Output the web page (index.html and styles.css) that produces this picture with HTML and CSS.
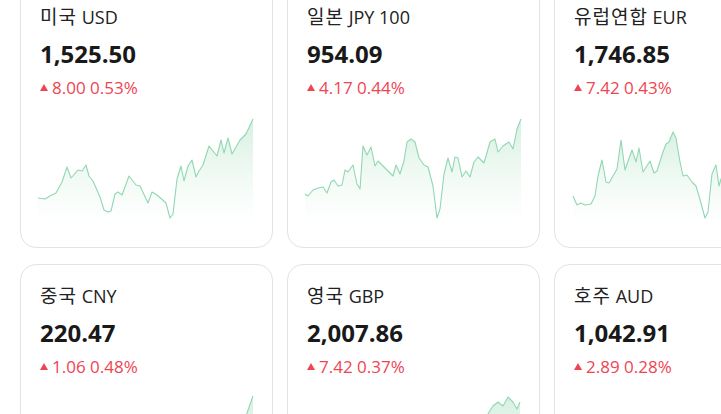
FILE: index.html
```html
<!DOCTYPE html>
<html lang="ko">
<head>
<meta charset="utf-8">
<title>환율</title>
<link rel="stylesheet" href="styles.css">
</head>
<body>
<div class="grid">
  <div class="card">
    <div class="name"><span class="ko">미국</span> USD</div>
    <div class="price">1,525.50</div>
    <div class="change"><span class="tri"></span>8.00 0.53%</div>
    <svg class="chart" viewBox="38 118 216 107" preserveAspectRatio="none">
      <defs><linearGradient id="g" x1="0" y1="0" x2="0" y2="1"><stop offset="0" stop-color="#d7f0e1"/><stop offset="1" stop-color="#ffffff" stop-opacity="0.6"/></linearGradient></defs>
      <polygon fill="url(#g)" points="38,225 38,199 45,200 50,197 56,194 62,183 67,168 71,179 78,171 82,172 86,166 89,177 93,182 100,198 104,211 108,213 111,212 115,195 118,193 122,196 129,177 136,186 140,187 148,204 152,193 157,196 166,204 170,219 173,215 177,180 181,167 184,182 188,167 192,161 196,178 199,172 203,166 209,147 217,157 221,141 224,154 228,139 232,155 240,141 246,135 253,120 253,225"/>
      <polyline class="line" points="38,199 45,200 50,197 56,194 62,183 67,168 71,179 78,171 82,172 86,166 89,177 93,182 100,198 104,211 108,213 111,212 115,195 118,193 122,196 129,177 136,186 140,187 148,204 152,193 157,196 166,204 170,219 173,215 177,180 181,167 184,182 188,167 192,161 196,178 199,172 203,166 209,147 217,157 221,141 224,154 228,139 232,155 240,141 246,135 253,120"/>
    </svg>
  </div>
  <div class="card">
    <div class="name"><span class="ko">일본</span> JPY 100</div>
    <div class="price">954.09</div>
    <div class="change"><span class="tri"></span>4.17 0.44%</div>
    <svg class="chart" viewBox="305 118 216 107" preserveAspectRatio="none">
      <polygon fill="url(#g)" points="305,225 305,195 308,197 313,191 318,189 323,188 327,194 331,183 334,181 338,187 342,186 345,171 348,173 353,166 357,185 360,190 363,147 367,156 371,148 375,167 378,162 383,167 389,173 393,177 396,166 400,175 404,162 407,143 411,140 415,143 419,159 424,166 428,168 433,187 437,219 440,210 444,175 448,159 452,173 455,158 458,159 462,178 466,172 470,178 474,163 478,158 484,164 490,143 495,140 498,153 503,147 509,143 513,150 517,130 521,120 521,225"/>
      <polyline class="line" points="305,195 308,197 313,191 318,189 323,188 327,194 331,183 334,181 338,187 342,186 345,171 348,173 353,166 357,185 360,190 363,147 367,156 371,148 375,167 378,162 383,167 389,173 393,177 396,166 400,175 404,162 407,143 411,140 415,143 419,159 424,166 428,168 433,187 437,219 440,210 444,175 448,159 452,173 455,158 458,159 462,178 466,172 470,178 474,163 478,158 484,164 490,143 495,140 498,153 503,147 509,143 513,150 517,130 521,120"/>
    </svg>
  </div>
  <div class="card">
    <div class="name"><span class="ko">유럽연합</span> EUR</div>
    <div class="price">1,746.85</div>
    <div class="change"><span class="tri"></span>7.42 0.43%</div>
    <svg class="chart" viewBox="572 118 216 107" preserveAspectRatio="none">
      <polygon fill="url(#g)" points="573,225 573,197 577,206 581,204 585,206 591,205 595,197 598,177 602,161 606,183 609,184 617,170 621,141 625,171 632,151 636,163 639,149 643,173 650,162 654,174 657,172 663,153 666,145 669,143 673,133 676,139 680,163 683,177 687,176 692,183 696,187 699,197 705,219 708,213 712,175 716,166 719,187 721,180 730,160 740,175 750,150 760,140 770,155 787,130 787,225"/>
      <polyline class="line" points="573,197 577,206 581,204 585,206 591,205 595,197 598,177 602,161 606,183 609,184 617,170 621,141 625,171 632,151 636,163 639,149 643,173 650,162 654,174 657,172 663,153 666,145 669,143 673,133 676,139 680,163 683,177 687,176 692,183 696,187 699,197 705,219 708,213 712,175 716,166 719,187 721,180 730,160 740,175 750,150 760,140 770,155 787,130"/>
    </svg>
  </div>
  <div class="card">
    <div class="name"><span class="ko">중국</span> CNY</div>
    <div class="price">220.47</div>
    <div class="change"><span class="tri"></span>1.06 0.48%</div>
    <svg class="chart" viewBox="38 397 216 107" preserveAspectRatio="none">
      <polygon fill="url(#g)" points="38,504 38,470 60,478 80,465 100,480 120,470 140,476 160,462 180,470 200,455 220,460 235,445 242,430 247,414 253,397 253,504"/>
      <polyline class="line" points="38,470 60,478 80,465 100,480 120,470 140,476 160,462 180,470 200,455 220,460 235,445 242,430 247,414 253,397"/>
    </svg>
  </div>
  <div class="card">
    <div class="name"><span class="ko">영국</span> GBP</div>
    <div class="price">2,007.86</div>
    <div class="change"><span class="tri"></span>7.42 0.37%</div>
    <svg class="chart" viewBox="305 397 216 107" preserveAspectRatio="none">
      <polygon fill="url(#g)" points="305,504 305,470 330,478 360,462 390,472 420,455 450,466 470,440 483,425 489,413 493,407 498,403 503,407 508,398 513,403 517,410 520,403 520,504"/>
      <polyline class="line" points="305,470 330,478 360,462 390,472 420,455 450,466 470,440 483,425 489,413 493,407 498,403 503,407 508,398 513,403 517,410 520,403"/>
    </svg>
  </div>
  <div class="card">
    <div class="name"><span class="ko">호주</span> AUD</div>
    <div class="price">1,042.91</div>
    <div class="change"><span class="tri"></span>2.89 0.28%</div>
    <svg class="chart" viewBox="572 397 216 107" preserveAspectRatio="none">
      <polygon fill="url(#g)" points="573,504 573,470 600,460 630,475 660,450 690,465 720,440 750,455 787,430 787,504"/>
      <polyline class="line" points="573,470 600,460 630,475 660,450 690,465 720,440 750,455 787,430"/>
    </svg>
  </div>
</div>
</body>
</html>
```

FILE: styles.css
```css
html, body {
  margin: 0;
  padding: 0;
  background: #ffffff;
  overflow: hidden;
}
body {
  font-family: "Open Sans", "Noto Sans CJK KR", sans-serif;
  color: #191919;
}
.grid {
  display: grid;
  grid-template-columns: repeat(3, 253px);
  column-gap: 14px;
  row-gap: 16px;
  margin: -15px 0 0 20px;
  width: 900px;
}
.card {
  box-sizing: border-box;
  height: 263px;
  border: 1px solid #e3e3e3;
  border-radius: 16px;
  padding: 18px 19px 0;
  overflow: hidden;
}
.name {
  font-size: 18px;
  line-height: 24px;
  height: 24px;
  color: #222;
  white-space: nowrap;
}
.name .ko {
  font-family: "Noto Sans CJK KR", sans-serif;
  font-size: 19px;
  letter-spacing: 1px;
}
.price {
  margin-top: 11px;
  font-size: 24px;
  line-height: 30px;
  font-weight: 700;
  color: #191919;
}
.change {
  margin-top: 8px;
  font-size: 17px;
  line-height: 22px;
  color: #f04452;
  display: flex;
  align-items: center;
}
.tri {
  width: 0;
  height: 0;
  border-left: 4.5px solid transparent;
  border-right: 4.5px solid transparent;
  border-bottom: 7px solid #f04452;
  margin-right: 4px;
  margin-bottom: 1px;
}
.chart {
  display: block;
  width: 216px;
  height: 107px;
  margin: 18px 0 0 -2px;
  overflow: visible;
}
.chart .line {
  fill: none;
  stroke: #8fd8b2;
  stroke-width: 1.1;
  stroke-linejoin: round;
}
```
